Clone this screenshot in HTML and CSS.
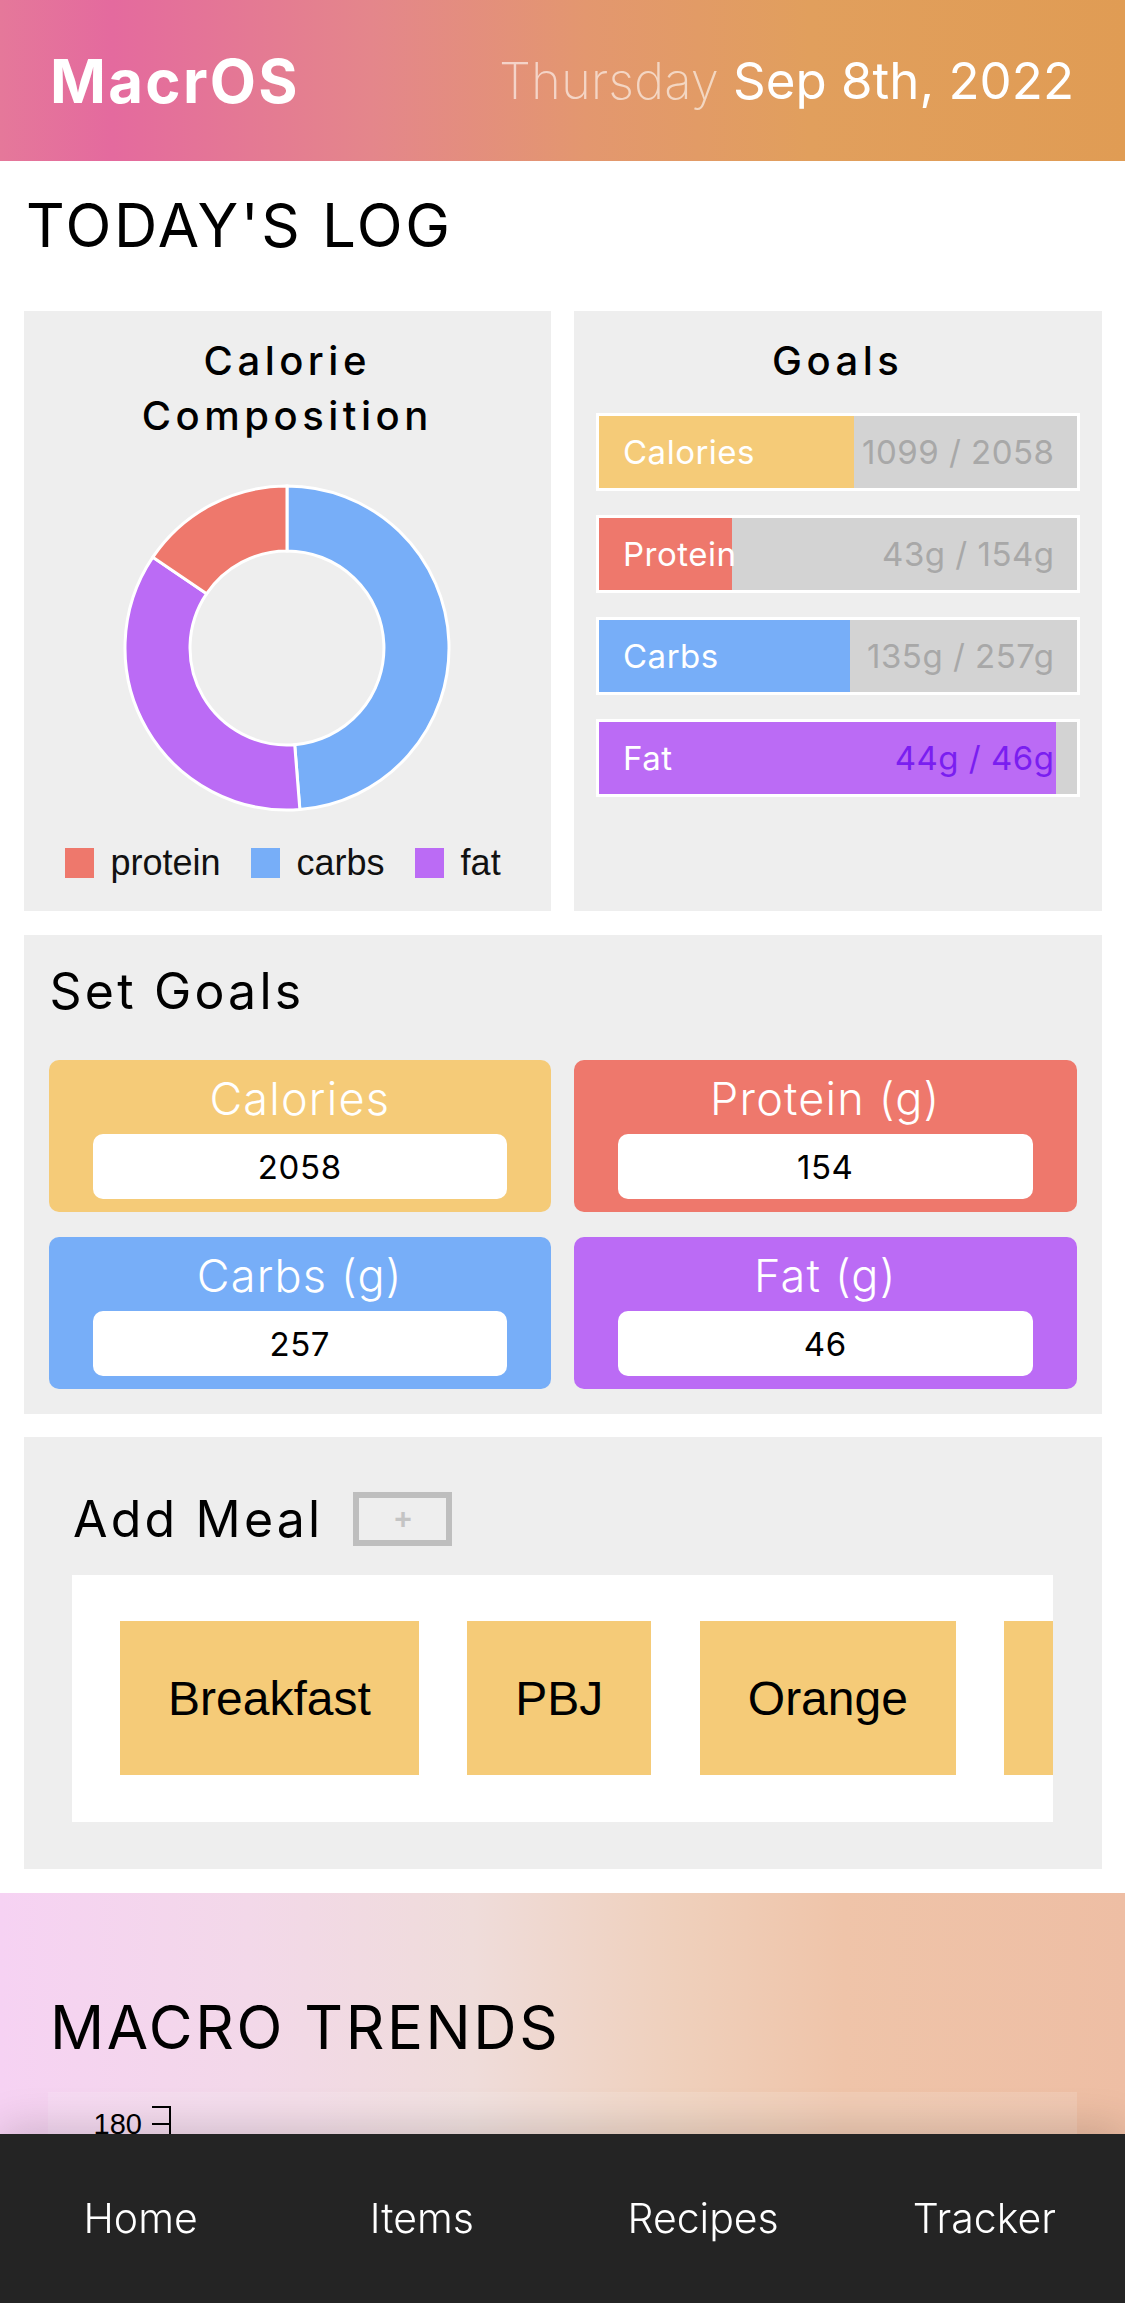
FILE: index.html
```html
<!DOCTYPE html>
<html lang="en">
<head>
<meta charset="utf-8">
<title>MacrOS</title>
<link rel="stylesheet" href="styles.css">
</head>
<body>
<div class="page">
  <header class="topbar">
    <div class="brand">MacrOS</div>
    <div class="date"><span class="day">Thursday</span> <span class="full">Sep 8th, 2022</span></div>
  </header>

  <section class="log">
    <h1 class="section-title">TODAY'S LOG</h1>
    <div class="log-grid">
      <div class="card comp">
        <h2 class="card-title">Calorie<br>Composition</h2>
        <svg class="donut" width="330" height="330" viewBox="0 0 330 330">
          <path class="seg-carbs" d="M165 3 A162 162 0 0 1 177.85 326.49 L172.70 261.69 A97 97 0 0 0 165 68 Z"/>
          <path class="seg-fat" d="M177.85 326.49 A162 162 0 0 1 30.83 74.21 L84.67 110.64 A97 97 0 0 0 172.70 261.69 Z"/>
          <path class="seg-protein" d="M30.83 74.21 A162 162 0 0 1 165 3 L165 68 A97 97 0 0 0 84.67 110.64 Z"/>
        </svg>
        <ul class="legend">
          <li><span class="swatch protein"></span>protein</li>
          <li><span class="swatch carbs"></span>carbs</li>
          <li><span class="swatch fat"></span>fat</li>
        </ul>
      </div>
      <div class="card goals">
        <h2 class="card-title">Goals</h2>
        <div class="bars">
          <div class="bar cal" style="--p:53.4%"><span class="bar-label">Calories</span><span class="bar-value">1099 / 2058</span></div>
          <div class="bar pro" style="--p:27.9%"><span class="bar-label">Protein</span><span class="bar-value">43g / 154g</span></div>
          <div class="bar carb" style="--p:52.5%"><span class="bar-label">Carbs</span><span class="bar-value">135g / 257g</span></div>
          <div class="bar fat" style="--p:95.7%"><span class="bar-label">Fat</span><span class="bar-value over">44g / 46g</span></div>
        </div>
      </div>
    </div>

    <div class="card set-goals">
      <h2 class="block-title">Set Goals</h2>
      <div class="goal-grid">
        <div class="goal cal"><span class="goal-label">Calories</span><div class="goal-input">2058</div></div>
        <div class="goal pro"><span class="goal-label">Protein (g)</span><div class="goal-input">154</div></div>
        <div class="goal carb"><span class="goal-label">Carbs (g)</span><div class="goal-input">257</div></div>
        <div class="goal fat"><span class="goal-label">Fat (g)</span><div class="goal-input">46</div></div>
      </div>
    </div>

    <div class="card add-meal">
      <div class="meal-head">
        <h2 class="block-title">Add Meal</h2>
        <button class="add-btn" type="button">+</button>
      </div>
      <div class="meal-scroll">
        <div class="meal">Breakfast</div>
        <div class="meal">PBJ</div>
        <div class="meal">Orange</div>
        <div class="meal meal-cut"></div>
      </div>
    </div>
  </section>

  <section class="trends">
    <h1 class="section-title trends-title">MACRO TRENDS</h1>
    <div class="trend-chart">
      <svg class="axis" width="1029" height="300" viewBox="0 0 1029 300">
        <path d="M104 15 H122 V300" fill="none" stroke="#000" stroke-width="2"/>
        <path d="M104 32 H122" fill="none" stroke="#000" stroke-width="2"/>
        <text x="94" y="42" text-anchor="end" class="tick">180</text>
      </svg>
    </div>
  </section>
</div>

<nav class="tabbar">
  <a class="tab">Home</a>
  <a class="tab">Items</a>
  <a class="tab">Recipes</a>
  <a class="tab">Tracker</a>
</nav>
</body>
</html>
```

FILE: styles.css
```css
* { box-sizing: border-box; }
html, body { margin: 0; padding: 0; }
body {
  font-family: Inter, "Liberation Sans", sans-serif;
  color: #000;
  background: #fff;
}
.page {
  width: 1125px;
  height: 2303px;
  overflow: hidden;
}

/* header */
.topbar {
  height: 161px;
  display: flex;
  align-items: center;
  justify-content: space-between;
  padding: 0 51px 0 50px;
  color: #fff;
  background: linear-gradient(90deg, #e5789a 0%, #e46a9e 10%, #e4868b 33%, #e3976f 52%, #e19f5d 72%, #e09c54 100%);
}
.brand {
  font-size: 60px;
  font-weight: 700;
  letter-spacing: 2.3px;
}
.date { font-size: 51px; }
.date .day { font-weight: 200; color: rgba(255,255,255,0.6); }
.date .full { font-weight: 400; }

/* titles */
.section-title {
  margin: 0;
  padding: 28px 26px 0;
  font-size: 60px;
  line-height: 72px;
  font-weight: 400;
  letter-spacing: 2.6px;
}

.log-grid {
  display: grid;
  grid-template-columns: 1fr 1fr;
  gap: 23px;
  padding: 0 23.5px;
  margin-top: 50px;
}
.card { background: #eeeeee; }
.comp, .goals {
  height: 600px;
  padding-top: 22px;
}
.card-title {
  margin: 0;
  text-align: center;
  font-size: 40px;
  line-height: 55px;
  font-weight: 500;
  letter-spacing: 4.5px;
}

/* donut */
.donut {
  display: block;
  margin: 40px auto 0;
}
.donut path { stroke: #fff; stroke-width: 3; }
.seg-carbs { fill: #77aef8; }
.seg-fat { fill: #bb6bf5; }
.seg-protein { fill: #ee786c; }

.legend {
  list-style: none;
  margin: 34px 0 0;
  padding: 0 0 0 41px;
  display: flex;
  gap: 30px;
  font-family: "Liberation Sans", Arial, sans-serif;
  font-size: 36px;
  color: #111;
}
.legend li {
  display: flex;
  align-items: center;
  gap: 17px;
  line-height: 31px;
}
.swatch { width: 29px; height: 30px; display: inline-block; }
.swatch.protein { background: #ee786c; }
.swatch.carbs { background: #77aef8; }
.swatch.fat { background: #bb6bf5; }

/* goals bars */
.bars {
  display: flex;
  flex-direction: column;
  gap: 24px;
  padding: 25px 22px 0;
}
.bar {
  height: 78px;
  border: 3px solid #fff;
  display: flex;
  align-items: center;
  justify-content: space-between;
  padding: 0 22px 0 24px;
  font-size: 33px;
  letter-spacing: 0.5px;
  background: linear-gradient(to right, var(--c) var(--p), #d3d3d3 var(--p));
}
.bar.cal { --c: #f5cb78; }
.bar.pro { --c: #ee786c; }
.bar.carb { --c: #77aef8; }
.bar.fat { --c: #bb6bf5; }
.bar-label { color: #fff; }
.bar-value { color: #a8a8a8; }
.bar-value.over { color: #7a1ef0; }

/* set goals */
.set-goals {
  margin: 24px 23.5px 0;
  padding: 25px;
}
.block-title {
  margin: 0;
  font-size: 50px;
  line-height: 62px;
  font-weight: 400;
  letter-spacing: 3.2px;
}
.set-goals .block-title { margin: 0 0 38px 1px; }
.goal-grid {
  display: grid;
  grid-template-columns: 1fr 1fr;
  gap: 25px 23px;
}
.goal {
  height: 152px;
  border-radius: 10px;
  padding: 11px 44px 13px;
  display: flex;
  flex-direction: column;
  align-items: center;
}
.goal.cal { background: #f5cb78; }
.goal.pro { background: #ee786c; }
.goal.carb { background: #77aef8; }
.goal.fat { background: #bb6bf5; }
.goal-label {
  color: #fff;
  font-size: 45px;
  line-height: 56px;
  font-weight: 300;
  letter-spacing: 1.2px;
}
.goal-input {
  margin-top: auto;
  width: 100%;
  height: 65px;
  border-radius: 10px;
  background: #fff;
  display: flex;
  align-items: center;
  justify-content: center;
  font-size: 33px;
  letter-spacing: 0.6px;
  color: #000;
}

/* add meal */
.add-meal {
  margin: 23px 23.5px 0;
  padding: 55px 48.5px 47px;
}
.meal-head {
  display: flex;
  align-items: center;
  gap: 30px;
  height: 54px;
  padding-left: 1px;
}
.add-btn {
  width: 99px;
  height: 54px;
  border: 6px solid #bebebe;
  background: transparent;
  color: #c4c4c4;
  font-family: "Liberation Sans", Arial, sans-serif;
  font-size: 30px;
  font-weight: 700;
  line-height: 1;
  padding: 0;
}
.meal-scroll {
  margin-top: 29px;
  height: 247px;
  background: #fff;
  display: flex;
  gap: 48.5px;
  padding: 46px 0 47px 48px;
  overflow: hidden;
}
.meal {
  flex: none;
  background: #f5cb78;
  padding: 0 48px;
  display: flex;
  align-items: center;
  font-family: "Liberation Sans", Arial, sans-serif;
  font-size: 48px;
}
.meal-cut { width: 200px; }

/* trends */
.trends {
  margin-top: 24px;
  height: 700px;
  padding: 98px 48px 0;
  background: linear-gradient(90deg, #f6d2f3 0%, #f3d8e9 22%, #efdcda 42%, #efd0bc 60%, #efc4a9 75%, #eebea4 100%);
}
.trends-title { padding: 0 0 0 2px; margin: 0 0 29px; }
.trend-chart {
  background: rgba(255,255,255,0.15);
  height: 500px;
}
.axis { display: block; }
.tick {
  font-family: "Liberation Sans", Arial, sans-serif;
  font-size: 29px;
  fill: #000;
}

/* tab bar */
.tabbar {
  position: fixed;
  left: 0;
  right: 0;
  bottom: 0;
  height: 169px;
  background: #242424;
  display: grid;
  grid-template-columns: repeat(4, 1fr);
  align-items: center;
  justify-items: center;
  box-shadow: 0 -6px 40px rgba(0,0,0,0.16);
}
.tab {
  color: #fff;
  font-size: 41px;
  font-weight: 300;
  padding-bottom: 2px;
}
```
